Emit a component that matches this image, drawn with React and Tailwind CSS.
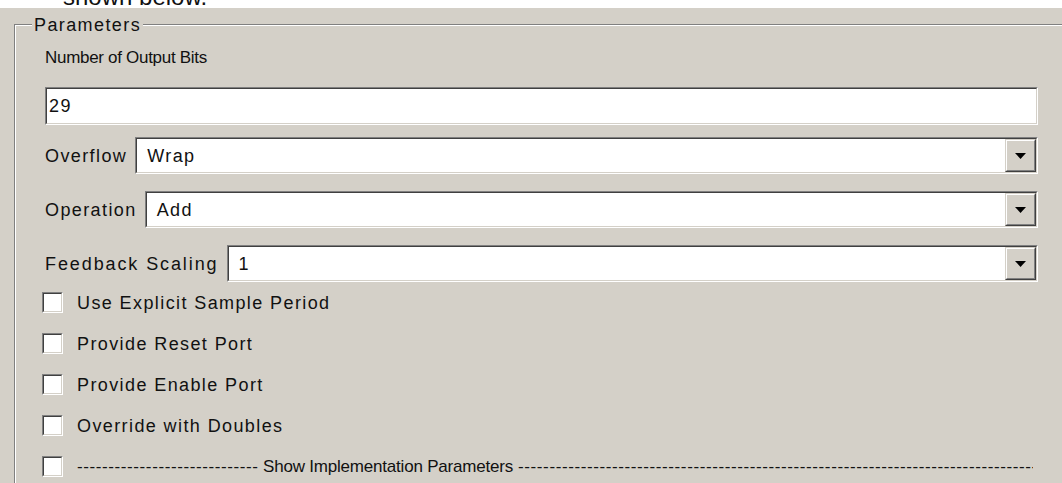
import React from 'react';

// Classic 3D sunken frame: dark outer/inner edges on top-left, light on bottom-right
function Sunken({ className = '', children }) {
  return (
    <div className={`border border-t-[#808080] border-l-[#808080] border-b-white border-r-white ${className}`}>
      <div className="h-full border border-t-[#404040] border-l-[#404040] border-b-[#d4d0c8] border-r-[#d4d0c8] bg-white">
        {children}
      </div>
    </div>
  );
}

function DropButton() {
  return (
    <div className="h-full w-[31px] shrink-0 border border-t-[#d4d0c8] border-l-[#d4d0c8] border-b-[#404040] border-r-[#404040]">
      <div className="h-full flex items-center justify-center bg-[#d4d0c8] border border-t-white border-l-white border-b-[#808080] border-r-[#808080]">
        <svg width="11" height="6" viewBox="0 0 11 6">
          <path d="M0 0h11L5.5 6z" fill="#000" />
        </svg>
      </div>
    </div>
  );
}

function SelectRow({ label, value, className = '', labelClass = '' }) {
  return (
    <div className={`flex items-center h-[37px] ${className}`}>
      <span className={`mr-[8px] whitespace-nowrap ${labelClass}`}>{label}</span>
      <Sunken className="flex-1 h-full">
        <div className="flex h-full">
          <span className="flex-1 flex items-center pl-[10px]">{value}</span>
          <DropButton />
        </div>
      </Sunken>
    </div>
  );
}

function CheckRow({ children, className = '' }) {
  return (
    <div className={`flex items-center h-[41px] -ml-[3px] ${className}`}>
      <Sunken className="w-[21px] h-[21px] shrink-0" />
      <div className="ml-[14px] flex-1 flex items-center whitespace-nowrap overflow-hidden">{children}</div>
    </div>
  );
}

export default function App() {
  return (
    <div className="w-[1062px] h-[483px] overflow-hidden bg-[#d4d0c8] text-[18px] leading-[20px] tracking-[1.4px] text-[#111] font-['Liberation_Sans',Arial,sans-serif]">
      <div className="h-[8px] bg-white overflow-hidden">
        <div className="pl-[63px] -mt-[15px] text-[24px] leading-[24px] tracking-normal">shown below.</div>
      </div>
      <div className="pl-[14px] pt-[16px]">
        <div className="relative border-t border-l border-[#808080] shadow-[inset_1px_1px_0_#fff] pl-[30px] pt-[23px] h-[460px]">
          <span className="absolute left-[17px] -top-[10px] px-[2px] bg-[#d4d0c8] leading-[20px]">Parameters</span>
          <div className="w-[993px] flex flex-col">
            <div className="text-[17px] tracking-[-0.3px]">Number of Output Bits</div>
            <Sunken className="h-[38px] mt-[19px]">
              <div className="h-full flex items-center pl-[2px]">29</div>
            </Sunken>
            <SelectRow label="Overflow" value="Wrap" className="mt-[12px]" />
            <SelectRow label="Operation" value="Add" className="mt-[17px]" />
            <SelectRow label="Feedback Scaling" value="1" className="mt-[17px]" labelClass="tracking-[1.9px]" />
            <div>
              <CheckRow>Use Explicit Sample Period</CheckRow>
              <CheckRow>Provide Reset Port</CheckRow>
              <CheckRow>Provide Enable Port</CheckRow>
              <CheckRow>Override with Doubles</CheckRow>
              <CheckRow className="mr-[5px] text-[17px]">
                <span className="w-[181px] overflow-hidden tracking-[0.6px]">-----------------------------</span>
                <span className="px-[5px] tracking-[-0.2px]">Show Implementation Parameters</span>
                <span className="flex-1 overflow-hidden tracking-[0.6px]">------------------------------------------------------------------------------------------------</span>
              </CheckRow>
            </div>
          </div>
        </div>
      </div>
    </div>
  );
}
